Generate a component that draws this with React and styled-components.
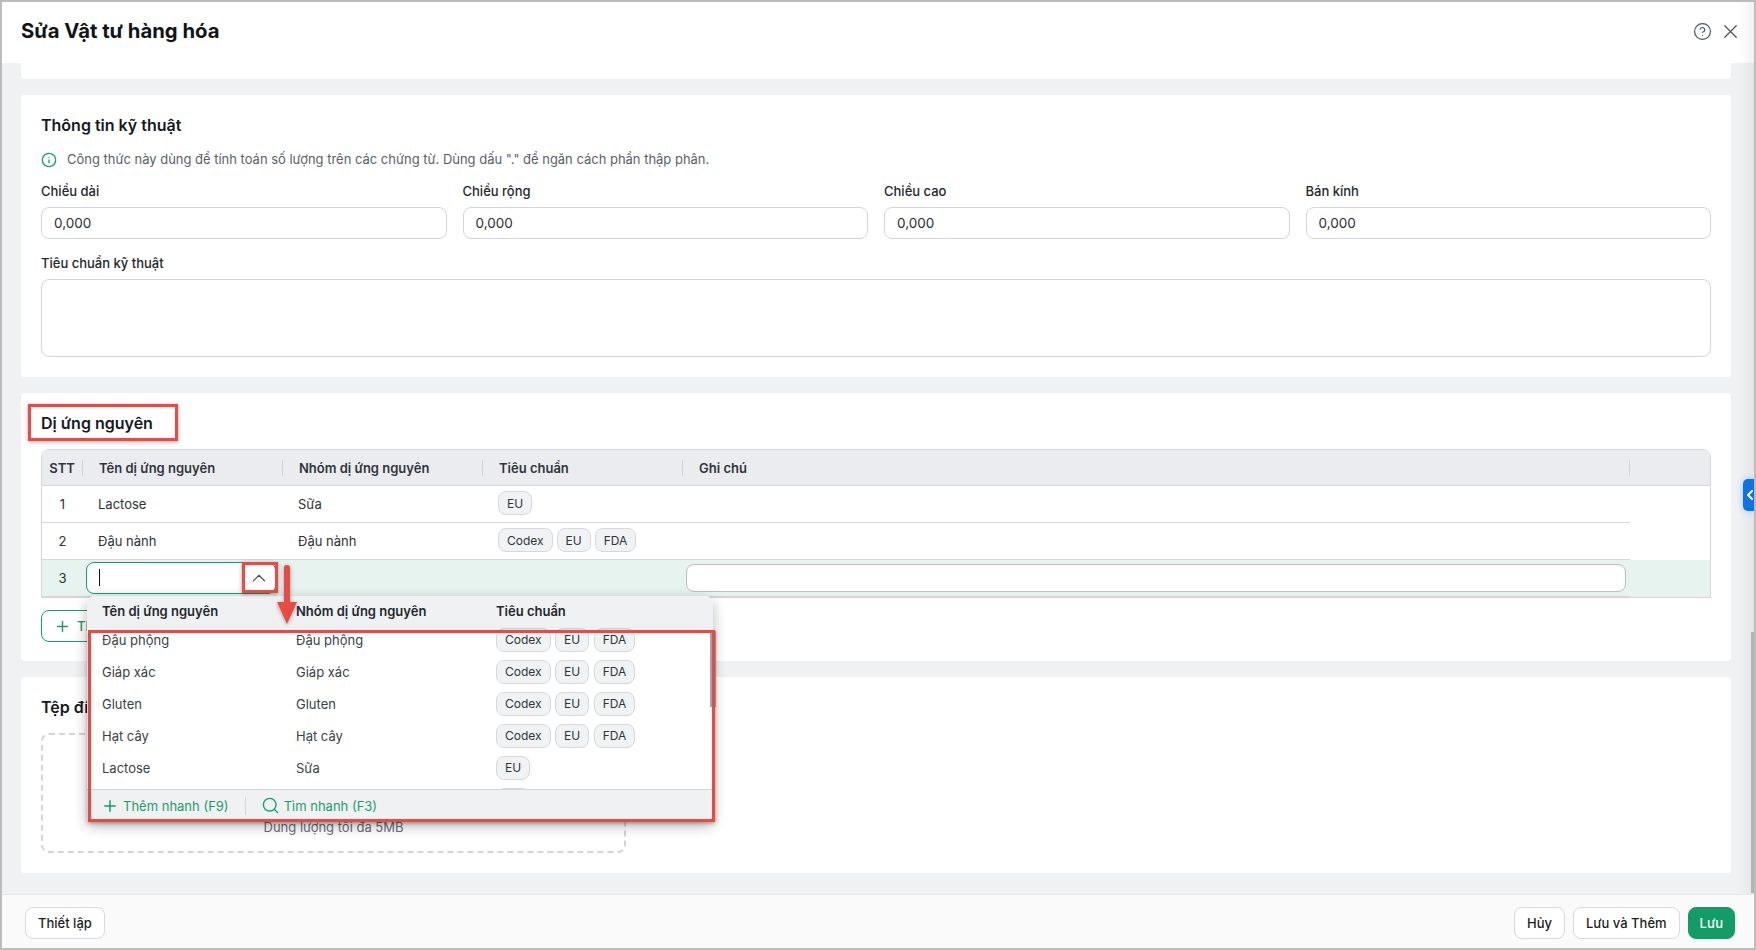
import React from "react";
import styled, { createGlobalStyle } from "styled-components";
import { CircleHelp, X, Info, ChevronUp, ChevronLeft, Plus, Search } from "lucide-react";

const Global = createGlobalStyle`
  html, body { margin: 0; padding: 0; background: #fff; }
  * { box-sizing: border-box; }
  body { font-family: Inter, "Noto Sans", "Liberation Sans", sans-serif; font-size: 13px; color: #1f2329; }
`;

const Frame = styled.div`
  position: relative; width: 1756px; height: 950px; overflow: hidden;
  display: flex; flex-direction: column; background: #fff;
  border: 2px solid #bcbcbc;
`;
const Header = styled.header`
  height: 61px; flex: none; display: flex; align-items: center; justify-content: space-between;
  padding: 0 12px 4px 19px; background: #fff;
`;
const Title = styled.h1`margin: 0; font-size: 20.3px; line-height: 28px; font-weight: 700; color: #111418;`;
const HeaderIcons = styled.div`display: flex; align-items: center; gap: 7px; margin-top: 2px; color: #4a5361;`;
const Body = styled.main`
  flex: 1; min-height: 0; overflow: hidden; background: #f0f1f3;
  display: flex; flex-direction: column; gap: 16px; padding: 0 23px 0 19px;
`;
const Stub = styled.div`height: 16px; flex: none; background: #fff; border-radius: 0 0 4px 4px;`;
const Card = styled.section`flex: none; background: #fff; border-radius: 4px; padding: 20px 20px ${p => p.$pb || 20}px;`;
const CardTitle = styled.h2`margin: 0; font-size: 16px; line-height: 20px; font-weight: 600; color: #16191d;`;
const Note = styled.div`
  display: flex; align-items: center; gap: 10px; margin: 14px 0 12px; line-height: 20px; color: #5a6069; font-size: 12.97px;
  svg { color: #12a06a; flex: none; margin-top: 1px; }
`;
const FieldGrid = styled.div`display: grid; grid-template-columns: repeat(4, 1fr); gap: 16px;`;
const Label = styled.div`line-height: 20px; margin-bottom: 6px; font-size: 13px; font-weight: 500; color: #23272d;`;
const TextBox = styled.div`
  height: 32px; border: 1px solid #d3d5da; border-radius: 8px; background: #fff;
  display: flex; align-items: center; padding: 0 12px; font-size: 13.5px; color: #2a2e34;
`;
const Area = styled.div`height: 78px; border: 1px solid #d3d5da; border-radius: 8px; background: #fff;`;
const Spaced = styled.div`margin-top: 14px;`;

const COLS = "41px 200px 200px 200px 947px 1fr";
const Table = styled.div`
  margin-top: 16px; border: 1px solid #d4d6da; border-radius: 8px 8px 0 0; position: relative;
`;
const HeadRow = styled.div`
  display: grid; grid-template-columns: ${COLS}; height: 36px; background: #ebecef;
  border-bottom: 1px solid #d4d6da; border-radius: 8px 8px 0 0; align-items: center;
`;
const HeadCell = styled.div`
  height: 16px; display: flex; align-items: center; font-size: 13px; font-weight: 600; color: #30353c;
  padding-left: ${p => p.$center ? 0 : 16}px; justify-content: ${p => p.$center ? "center" : "flex-start"};
  border-right: ${p => p.$noline ? 0 : "1px solid #d3d5da"};
`;
const Row = styled.div`
  display: grid; grid-template-columns: ${COLS}; height: 37px; background: ${p => p.$active ? "#e6f3ee" : "#fff"};
`;
const Cell = styled.div`
  display: flex; align-items: center; gap: 4px; font-size: 13px; color: #2d3137;
  padding-left: ${p => p.$pl ?? 15}px; justify-content: ${p => p.$center ? "center" : "flex-start"};
  border-bottom: ${p => p.$noline ? 0 : "1px solid #d4d6da"};
  position: relative;
`;
const Pill = styled.span`
  display: inline-flex; align-items: center; height: 24px; padding: 0 8px; border: 1px solid #d6d8dc; border-radius: 8px;
  background: #f1f2f4; font-size: 12px; color: #30353c; margin-top: ${p => p.$up ? -2 : 0}px;
`;
const Combo = styled.div`
  position: relative; width: 190px; height: 32px; margin-top: -1px; background: #fff; border: 1px solid #12a06a; border-radius: 8px;
  display: flex; align-items: center; justify-content: space-between; padding: 0 5px 0 12px;
  color: #4a5361;
`;
const Caret = styled.span`width: 1px; height: 17px; background: #111;`;
const NoteInput = styled.div`width: 940px; height: 28px; margin-top: -1px; background: #fff; border: 1px solid #bcbec2; border-radius: 8px;`;

const AddButton = styled.button`
  margin-top: 12px; height: 32px; width: 120px; display: flex; align-items: center; gap: 6px; padding: 0 12px;
  background: #fff; border: 1px solid #12a06a; border-radius: 8px; color: #12a06a; font: 500 13px Inter, sans-serif;
  white-space: nowrap;
`;

const Drop = styled.div`
  position: absolute; left: 0; top: 33px; width: 626px; height: 226px; z-index: 5; background: #fff;
  border-radius: 8px 8px 4px 4px; box-shadow: 0 4px 14px rgba(0,0,0,.28); display: flex; flex-direction: column; overflow: hidden;
`;
const DropHead = styled.div`
  flex: none; height: 32px; background: #f0f1f3; display: grid; grid-template-columns: 194px 200px 1fr; padding: 0 0 2px 15px; align-items: center;
  font-size: 13px; font-weight: 600; color: #23272d; position: relative; z-index: 1;
`;
const DropList = styled.div`flex: 1; min-height: 0; overflow: hidden; position: relative;`;
const DropRow = styled.div`
  height: 32px; display: grid; grid-template-columns: 194px 200px 1fr; padding-left: 15px; align-items: center; font-size: 13px; color: #3a3f46;
  &:first-child { margin-top: -4px; }
`;
const Pills = styled.div`display: flex; gap: 4.5px;`;
const DropFoot = styled.div`
  flex: none; height: 33px; background: #f0f1f3; border-top: 1px solid #d4d6da; display: flex; align-items: center; padding: 0 0 0 14px;
  color: #1a9e6f; font-size: 13px;
`;
const FootLink = styled.span`display: inline-flex; align-items: center; gap: 4px; svg { color: #12a06a; }`;
const FootSep = styled.span`width: 1px; height: 18px; background: #d4d6da; margin: 0 15px 0 16px;`;

const DashBox = styled.div`
  margin-top: 16px; width: 585px; height: 120px; border: 2px dashed #d3d5d8; border-radius: 8px;
  display: flex; flex-direction: column; justify-content: flex-end; align-items: center; padding-bottom: 14px;
  color: #6a6f76; font-size: 13px; line-height: 20px;
`;

const Footer = styled.footer`
  height: 54px; flex: none; background: #fafafa; border-top: 1px solid #e6e7e9; display: flex; justify-content: space-between;
  padding: 12px 19px 0 23px; align-items: flex-start;
`;
const FootGroup = styled.div`display: flex; gap: 8px;`;
const Btn = styled.button`
  height: 32px; padding: 0 ${p => p.$primary ? 11 : 12}px; border-radius: 8px; font: 500 13px Inter, sans-serif; cursor: pointer;
  background: ${p => p.$primary ? "#129c67" : "#fff"}; color: ${p => p.$primary ? "#fff" : "#1b1f24"};
  border: 1px solid ${p => p.$primary ? "#129c67" : "#d8d9dc"};
`;

const RightShade = styled.div`
  position: absolute; right: 0; top: 0; bottom: 54px; width: 16px; pointer-events: none;
  background: linear-gradient(to right, rgba(0,0,0,0), rgba(0,0,0,.05));
`;
const ScrollThumb = styled.div`position: absolute; right: 0; top: 630px; width: 3px; height: 261px; background: #b3b3b3;`;
const ListThumb = styled.div`position: absolute; left: 708px; top: 629px; width: 6px; height: 76px; background: #a1a6b2; z-index: 9;`;
const SideTab = styled.div`
  position: absolute; right: 0; top: 477px; width: 11px; height: 32px; background: #0b72e7; border-radius: 5px 0 0 5px;
  display: flex; align-items: center; justify-content: flex-start; color: #fff; overflow: hidden;
  box-shadow: 0 0 6px rgba(11,114,231,.3);
  svg { flex: none; margin-left: -1px; }
`;
const RedBox = styled.div`
  position: absolute; left: ${p => p.$x}px; top: ${p => p.$y}px; width: ${p => p.$w}px; height: ${p => p.$h}px;
  border: 3px solid #e94b43; box-shadow: 0 1px 4px rgba(0,0,0,.35), inset 0 0 2px rgba(0,0,0,.1); z-index: 10; pointer-events: none;
`;
const Arrow = styled.svg`
  position: absolute; left: 273px; top: 560px; z-index: 11; overflow: visible; filter: drop-shadow(0 1px 2px rgba(0,0,0,.35));
`;

const all = ["Codex", "EU", "FDA"];
const items = [
  ["Đậu phộng", "Đậu phộng", all],
  ["Giáp xác", "Giáp xác", all],
  ["Gluten", "Gluten", all],
  ["Hạt cây", "Hạt cây", all],
  ["Lactose", "Sữa", ["EU"]],
  ["", "", ["EU"]],
];
const rows = [
  [1, "Lactose", "Sữa", ["EU"]],
  [2, "Đậu nành", "Đậu nành", all],
];

export default function App() {
  return (
    <Frame>
      <Global />
      <Header>
        <Title>Sửa Vật tư hàng hóa</Title>
        <HeaderIcons>
          <CircleHelp size={19} strokeWidth={1.5} />
          <X size={23} strokeWidth={1.3} />
        </HeaderIcons>
      </Header>
      <Body>
        <Stub />
        <Card>
          <CardTitle>Thông tin kỹ thuật</CardTitle>
          <Note><Info size={16} strokeWidth={2} />Công thức này dùng để tính toán số lượng trên các chứng từ. Dùng dấu "." để ngăn cách phần thập phân.</Note>
          <FieldGrid>
            {["Chiều dài", "Chiều rộng", "Chiều cao", "Bán kính"].map(l => (
              <div key={l}><Label>{l}</Label><TextBox>0,000</TextBox></div>
            ))}
          </FieldGrid>
          <Spaced><Label>Tiêu chuẩn kỹ thuật</Label><Area /></Spaced>
        </Card>
        <Card $pb={19}>
          <CardTitle>Dị ứng nguyên</CardTitle>
          <Table>
            <HeadRow>
              <HeadCell $center>STT</HeadCell>
              <HeadCell>Tên dị ứng nguyên</HeadCell>
              <HeadCell>Nhóm dị ứng nguyên</HeadCell>
              <HeadCell>Tiêu chuẩn</HeadCell>
              <HeadCell>Ghi chú</HeadCell>
              <HeadCell $noline />
            </HeadRow>
            {rows.map(([n, name, group, tags]) => (
              <Row key={n}>
                <Cell $center $pl={0}>{n}</Cell>
                <Cell>{name}</Cell>
                <Cell>{group}</Cell>
                <Cell>{tags.map(t => <Pill key={t} $up>{t}</Pill>)}</Cell>
                <Cell />
                <Cell $noline />
              </Row>
            ))}
            <Row $active>
              <Cell $center $pl={0}>3</Cell>
              <Cell $pl={3}>
                <Combo>
                  <Caret />
                  <ChevronUp size={22} strokeWidth={1.3} />
                  <Drop>
                    <DropHead><span>Tên dị ứng nguyên</span><span>Nhóm dị ứng nguyên</span><span>Tiêu chuẩn</span></DropHead>
                    <DropList>
                      {items.map(([a, b, tags], i) => (
                        <DropRow key={i}>
                          <span>{a}</span><span>{b}</span>
                          <Pills>{tags.map(t => <Pill key={t}>{t}</Pill>)}</Pills>
                        </DropRow>
                      ))}
                    </DropList>
                    <DropFoot>
                      <FootLink><Plus size={18} strokeWidth={2} />Thêm nhanh (F9)</FootLink>
                      <FootSep />
                      <FootLink><Search size={19} strokeWidth={1.7} />Tìm nhanh (F3)</FootLink>
                    </DropFoot>
                  </Drop>
                </Combo>
              </Cell>
              <Cell />
              <Cell />
              <Cell $pl={3}><NoteInput /></Cell>
              <Cell $noline />
            </Row>
          </Table>
          <AddButton><Plus size={17} strokeWidth={2} />Thêm dòng</AddButton>
        </Card>
        <Card>
          <CardTitle>Tệp đính kèm</CardTitle>
          <DashBox>Dung lượng tối đa 5MB</DashBox>
        </Card>
      </Body>
      <Footer>
        <Btn>Thiết lập</Btn>
        <FootGroup>
          <Btn>Hủy</Btn>
          <Btn>Lưu và Thêm</Btn>
          <Btn $primary>Lưu</Btn>
        </FootGroup>
      </Footer>
      <RightShade />
      <ScrollThumb />
      <SideTab><ChevronLeft size={16} strokeWidth={3} /></SideTab>
      <ListThumb />
      <RedBox $x={26} $y={402} $w={150} $h={37} />
      <RedBox $x={240} $y={560} $w={36} $h={31} />
      <RedBox $x={86} $y={628} $w={627} $h={192} />
      <Arrow width="28" height="64" viewBox="0 0 28 64">
        <path d="M12 6 V44" stroke="#e94b43" strokeWidth="6" strokeLinecap="round" />
        <path d="M2 40 H22 L12 62 Z" fill="#e94b43" />
      </Arrow>
    </Frame>
  );
}
